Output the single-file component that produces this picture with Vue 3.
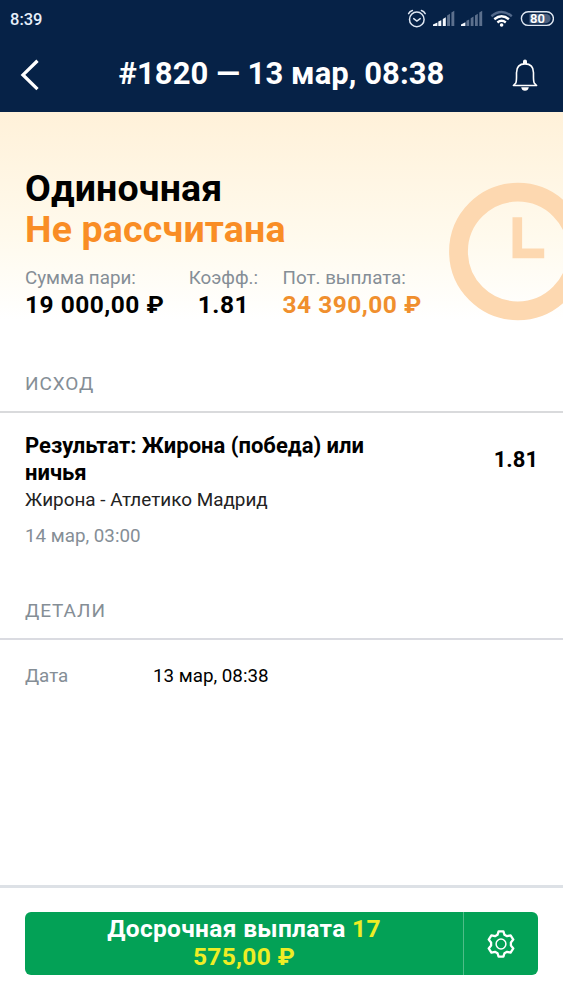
<script setup>
const stats = [
  { id: 'stake', label: 'Сумма пари:', value: '19 000,00 ₽' },
  { id: 'odds', label: 'Коэфф.:', value: '1.81' },
  { id: 'payout', label: 'Пот. выплата:', value: '34 390,00 ₽' },
]
</script>

<template>
  <div class="screen">
    <header class="header">
      <div class="status">
        <span class="time">8:39</span>
        <svg class="status-icons" width="150" height="22" viewBox="404 8 150 22" fill="none">
          <g stroke="#dfe7f2" stroke-width="1.5" stroke-linecap="round">
            <circle cx="416.8" cy="19.4" r="7.3" />
            <path d="M413.7 18.6l3.2 2.4 3.3-2.4M408.6 13.6q1.2-2.4 3.8-3.1M425.2 13.6q-1.2-2.4-3.8-3.1" />
          </g>
          <g fill="#f4f8fd">
            <path d="M433 26v-1.6l4.4-2V26zM438.3 21.6l3-1.4V26h-3zM442.8 19l3-1.8V26h-3zM461 26v-1.6l4.4-2.2V26z" />
          </g>
          <path fill="#5c708d" d="M447.1 15.5l2.9-1.7V26h-2.9zM451.4 12.6l2.9-1.8V26h-2.9zM466.4 20.8l2.8-1.4V26h-2.8zM470.7 18.2l2.8-1.6V26h-2.8zM475 15.5l2.8-1.7V26H475zM479.3 12.6l2.9-1.8V26h-2.9z" />
          <path d="M491.4 16.2q10.2-8.2 20.4 0" stroke="#53698a" stroke-width="2.4" />
          <path d="M494.3 19.2q7.3-6 14.6 0M497.4 22.5q4.2-3.4 8.4 0" stroke="#fff" stroke-width="2.4" />
          <circle cx="501.6" cy="25" r="1.8" fill="#fff" />
          <rect x="521.4" y="11.8" width="32" height="13.6" rx="6.8" stroke="#dfe7f2" stroke-width="1.4" />
          <path d="M529.5 14H546a4.6 4.6 0 0 1 0 9.2h-16.5z" fill="#4c6180" />
          <text x="537.5" y="23.3" text-anchor="middle" fill="#fff" class="battery">80</text>
        </svg>
      </div>
      <div class="nav">
        <svg class="back" width="20" height="32" viewBox="0 0 20 32" fill="none">
          <path d="M17.5 1.8L3 15.9l14.5 14.2" stroke="#fff" stroke-width="3.3" />
        </svg>
        <h1 class="title">#1820 — 13 мар, 08:38</h1>
        <svg class="bell" width="26" height="32" viewBox="0 0 26 32" fill="none">
          <path d="M3.8 24C4.8 21.5 4.5 18 4.5 13.8 4.5 8 7.9 4.9 13 4.9s8.5 3.1 8.5 8.9c0 4.2-.3 7.7.7 10.2l2.4 2.5H1.4z" stroke="#fff" stroke-width="1.6" stroke-linejoin="round" />
          <path d="M11 5V2.4Q11 .6 13 .6t2 1.8V5zM9.2 28.2h7.6q-.7 3.5-3.8 3.5t-3.8-3.5z" fill="#fff" />
        </svg>
      </div>
    </header>

    <section class="hero">
      <svg class="clock" width="114" height="140" viewBox="0 0 114 140" fill="none">
        <circle cx="68.8" cy="69.5" r="59.3" stroke="#fdd8b0" stroke-width="18.8" />
        <path d="M68.3 35.2v36.2h26.9" stroke="#fdd8b0" stroke-width="9.6" />
      </svg>
      <h2 class="kind">Одиночная</h2>
      <div class="state">Не рассчитана</div>
      <div class="stats">
        <div v-for="s in stats" :key="s.id" class="stat" :class="s.id">
          <div class="label">{{ s.label }}</div>
          <div class="value">{{ s.value }}</div>
        </div>
      </div>
    </section>

    <h3 class="section-title outcome-title">ИСХОД</h3>
    <section class="outcome">
      <div class="outcome-text">
        <div class="result">Результат: Жирона (победа) или ничья</div>
        <div class="match">Жирона - Атлетико Мадрид</div>
        <div class="when">14 мар, 03:00</div>
      </div>
      <div class="outcome-odds">1.81</div>
    </section>

    <h3 class="section-title details-title">ДЕТАЛИ</h3>
    <section class="details">
      <span class="details-label">Дата</span>
      <span class="details-value">13 мар, 08:38</span>
    </section>

    <footer class="footer">
      <div class="cashout">
        <button class="cashout-main">
          <span class="cashout-line">Досрочная выплата <b>17</b></span>
          <span class="cashout-line"><b>575,00 ₽</b></span>
        </button>
        <button class="cashout-settings">
          <svg width="28" height="28" viewBox="-14 -14 28 28" fill="none" stroke="#fff">
            <path d="M-2.4 -12.6H2.4L3.5 -9.2L6 -7.8L9.6 -8.6L12.3 -4.4L9.9 -1.6V1.6L12.3 4.4L9.6 8.6L6 7.8L3.5 9.2L2.4 12.6H-2.4L-3.5 9.2L-6 7.8L-9.6 8.6L-12.3 4.4L-9.9 1.6V-1.6L-12.3 -4.4L-9.6 -8.6L-6 -7.8L-3.5 -9.2Z" stroke-width="2.3" stroke-linejoin="round" />
            <circle r="4.9" stroke-width="1.5" />
          </svg>
        </button>
      </div>
    </footer>
  </div>
</template>

<style>
body { margin: 0; background: #fff; }
</style>

<style scoped>
.screen {
  height: 1000px;
  display: flex;
  flex-direction: column;
  overflow: hidden;
  background: #fff;
  color: #000;
  font-family: Roboto, "Liberation Sans", sans-serif;
  white-space: nowrap;
}
h1, h2, h3 { margin: 0; }
.header { height: 112px; background: #062247; color: #fff; flex: none; }
.status {
  height: 38px;
  box-sizing: border-box;
  padding: 9px 9px 0 10px;
  display: flex;
  justify-content: space-between;
}
.status-icons { margin-top: -1px; }
.time { font-size: 16.5px; line-height: 22px; font-weight: 500; color: #e6effa; }
.battery { font-size: 13px; font-weight: 600; }
.nav { height: 74px; display: flex; align-items: center; justify-content: space-between; padding: 0 25px 0 20px; }
.back { width: 20px; }
.title { font-size: 31px; line-height: 40px; font-weight: 700; letter-spacing: 0.06px; margin: -3px 0 0 11px; }
.bell { width: 26px; }

.hero {
  position: relative;
  height: 208px;
  flex: none;
  box-sizing: border-box;
  padding: 56px 25px 0;
  background: linear-gradient(#fff1d9, #fffaed 60%, #fff);
}
.clock { position: absolute; right: 0; top: 70px; }
.kind, .state { font-size: 37.5px; line-height: 41px; font-weight: 700; letter-spacing: 0.17px; }
.state { color: #f98d25; }
.stats { display: flex; margin-top: 15px; gap: 24.5px; }
.label { font-size: 18.8px; line-height: 26px; color: #858e96; }
.value { font-size: 24.5px; line-height: 28px; font-weight: 700; letter-spacing: 0.48px; }
.odds { text-align: center; }
.payout .value { color: #f08f2d; }

.section-title {
  flex: none;
  box-sizing: border-box;
  padding-left: 25px;
  font-size: 19px;
  line-height: 26px;
  font-weight: 400;
  letter-spacing: 0.9px;
  color: #858e96;
  border-bottom: 2px solid #d9dadc;
}
.outcome-title { margin-top: 51px; height: 42px; }
.outcome { display: flex; justify-content: space-between; padding: 19px 25px 0; height: 166px; }
.outcome-text { width: 360px; }
.result { font-size: 22px; line-height: 27px; font-weight: 700; white-space: normal; }
.match { font-size: 18.9px; line-height: 26px; color: #222; margin-top: 1px; }
.when { font-size: 18.8px; line-height: 26px; margin-top: 10px; color: #858e96; }
.outcome-odds { font-size: 22px; line-height: 27px; font-weight: 700; margin-top: 14px; }
.details-title { height: 42px; border-color: #dadbe1; }
.details { display: flex; padding: 23px 25px 0; font-size: 18.8px; line-height: 26px; }
.details-label { width: 128px; color: #858e96; }

.footer { margin-top: auto; height: 115px; box-sizing: border-box; border-top: 3px solid #dde1e6; padding: 24px 25px 0; }
.cashout { display: flex; height: 63px; border-radius: 6px; overflow: hidden; background: #03a156; }
.cashout button { border: 0; padding: 0; background: none; color: #fff; font: inherit; }
.cashout-main { flex: 1; }
.cashout .cashout-line { display: block; font-size: 24.5px; line-height: 28px; font-weight: 700; letter-spacing: 0.32px; }
.cashout .cashout-main { padding-bottom: 2px; }
.cashout-line b { color: #eeed25; font-weight: 700; }
.cashout .cashout-settings { width: 75px; border-left: 1px solid #4fbd88; display: flex; align-items: center; justify-content: center; }
</style>
